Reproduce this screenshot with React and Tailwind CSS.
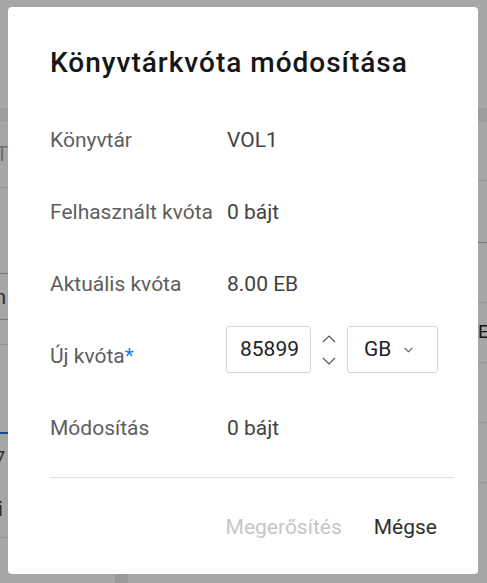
export default function App() {
  const rowL = "h-[72px] flex items-center";
  const label = "w-[177px] shrink-0 text-[21px] leading-[28px] text-[#5e5e5e]";
  const value = "text-[21px] leading-[28px] text-[#424242]";
  return (
    <div className="relative w-[487px] h-[583px] overflow-hidden bg-white font-[family-name:Roboto,'Liberation_Sans',sans-serif]">
      {/* background page */}
      <div className="flex h-full">
        <div className="w-[240px] flex flex-col">
          <div className="h-[108px] shrink-0" />
          <div className="h-[13px] shrink-0 bg-[#f2f2f2]" />
          <div className="h-[67px] shrink-0 border-b border-[#e4e4e4] flex items-center">
            <span className="ml-[-4px] text-[20px] text-[#9aa8b8]">T</span>
          </div>
          <div className="h-[86px] shrink-0 border-b border-[#b8b8b8]" />
          <div className="h-[46px] shrink-0 border-b border-[#b8b8b8] flex items-center">
            <span className="ml-[-5px] text-[20px] text-[#444]">n</span>
          </div>
          <div className="h-[25px] shrink-0 border-b border-[#e4e4e4]" />
          <div className="h-[89px] shrink-0 border-b-2 border-[#1a73e8]" />
          <div className="h-[47px] shrink-0 flex items-center">
            <span className="ml-[-5px] text-[18px] text-[#444]">7</span>
          </div>
          <div className="h-[57px] shrink-0 border-b border-[#e4e4e4] flex items-center">
            <span className="ml-[-2px] text-[20px] text-[#444]">i</span>
          </div>
          <div className="flex-1 flex">
            <div className="w-[115px]" />
            <div className="w-[13px] bg-[#ececec]" />
          </div>
        </div>
        <div className="flex-1 flex flex-col items-end">
          <div className="w-[9px] flex flex-col">
            <div className="h-[108px] shrink-0" />
            <div className="h-[14px] shrink-0 bg-[#f2f2f2]" />
            <div className="h-[59px] shrink-0 border-b border-[#e4e4e4]" />
            <div className="h-[62px] shrink-0 border-b border-[#b8b8b8]" />
            <div className="h-[60px] shrink-0 border-b border-[#e4e4e4]" />
            <div className="h-[60px] shrink-0 border-b border-[#e4e4e4] flex items-center">
              <span className="ml-[0px] text-[19px] text-[#222]">E</span>
            </div>
            <div className="h-[60px] shrink-0 border-b border-[#e4e4e4]" />
            <div className="h-[60px] shrink-0 border-b border-[#e4e4e4]" />
          </div>
        </div>
      </div>

      {/* overlay */}
      <div className="absolute inset-0 bg-black/[0.35] pl-[8px] pt-[7px]">
        <div className="w-[470px] h-[567px] bg-white rounded-[4px] flex flex-col pl-[42px] pr-[24px] pt-[40px]">
          <h2 className="text-[28px] leading-[32px] font-medium text-[#161616] tracking-[1px] whitespace-nowrap">
            Könyvtárkvóta módosítása
          </h2>
          <div className="mt-[25px] flex flex-col">
            <div className={rowL}>
              <span className={label}>Könyvtár</span>
              <span className={value}>VOL1</span>
            </div>
            <div className={rowL}>
              <span className={label}>Felhasznált kvóta</span>
              <span className={value}>0 bájt</span>
            </div>
            <div className={rowL}>
              <span className={label}>Aktuális kvóta</span>
              <span className={value}>8.00 EB</span>
            </div>
            <div className={rowL}>
              <span className={label}>
                Új kvóta<span className="text-[#1a7fe6]">*</span>
              </span>
              <div className="flex items-center mb-[13px] ml-[-1px]">
                <div className="w-[85px] h-[47px] border border-[#d6d6d6] rounded-[3px] flex items-center pl-[13px] text-[21px] text-[#222]">
                  85899
                </div>
                <div className="w-[36px] flex flex-col items-center gap-[14px]">
                  <svg width="14" height="8" viewBox="0 0 14 8" fill="none">
                    <polyline points="1,7 7,1 13,7" stroke="#555" strokeWidth="1.2" />
                  </svg>
                  <svg width="14" height="8" viewBox="0 0 14 8" fill="none">
                    <polyline points="1,1 7,7 13,1" stroke="#555" strokeWidth="1.2" />
                  </svg>
                </div>
                <div className="w-[91px] h-[47px] border border-[#d6d6d6] rounded-[3px] flex items-center pl-[16px] text-[21px] text-[#222]">
                  <span>GB</span>
                  <svg className="ml-[13px]" width="9" height="6" viewBox="0 0 9 6" fill="none">
                    <polyline points="0.5,0.8 4.5,4.8 8.5,0.8" stroke="#555" strokeWidth="1.1" />
                  </svg>
                </div>
              </div>
            </div>
            <div className={rowL}>
              <span className={label}>Módosítás</span>
              <span className={value}>0 bájt</span>
            </div>
          </div>
          <div className="mt-[13px] h-px bg-[#e0e0e0]" />
          <div className="mt-[30px] flex justify-end mr-[1px]">
            <button className="h-[40px] px-[16px] text-[21px] text-[#c6c6c6]">Megerősítés</button>
            <button className="h-[40px] px-[16px] text-[21px] text-[#2e2e2e]">Mégse</button>
          </div>
        </div>
      </div>
    </div>
  );
}
